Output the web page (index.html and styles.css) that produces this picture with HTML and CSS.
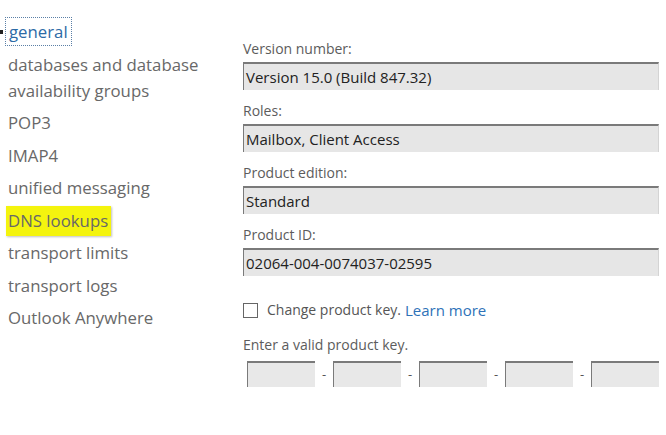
FILE: index.html
```html
<!DOCTYPE html>
<html lang="en">
<head>
  <meta charset="UTF-8">
  <title>Server properties</title>
  <link rel="stylesheet" href="styles.css">
</head>
<body>
<div class="page">
  <ul class="nav">
    <li class="active"><span class="focus">general</span></li>
    <li>databases and database availability groups</li>
    <li>POP3</li>
    <li>IMAP4</li>
    <li>unified messaging</li>
    <li><span class="mark">DNS lookups</span></li>
    <li>transport limits</li>
    <li>transport logs</li>
    <li>Outlook Anywhere</li>
  </ul>

  <div class="form">
    <div class="group">
      <label>Version number:</label>
      <div class="field">Version 15.0 (Build 847.32)</div>
    </div>
    <div class="group">
      <label>Roles:</label>
      <div class="field">Mailbox, Client Access</div>
    </div>
    <div class="group">
      <label>Product edition:</label>
      <div class="field">Standard</div>
    </div>
    <div class="group">
      <label>Product ID:</label>
      <div class="field">02064-004-0074037-02595</div>
    </div>

    <div class="check">
      <span class="box"></span>
      Change product key. <a href="#">Learn more</a>
    </div>

    <label class="hint">Enter a valid product key.</label>
    <div class="keys">
      <div class="key"></div><span class="dash">-</span>
      <div class="key"></div><span class="dash">-</span>
      <div class="key"></div><span class="dash">-</span>
      <div class="key"></div><span class="dash">-</span>
      <div class="key"></div>
    </div>
  </div>
</div>
</body>
</html>
```

FILE: styles.css
```css
body {
  margin: 0;
  padding: 0;
  background: #fff;
  font-family: "Open Sans", "Noto Sans", sans-serif;
}

.page {
  display: grid;
  grid-template-columns: 243px 416px;
}

.nav {
  list-style: none;
  margin: 0;
  padding: 19px 0 0 8px;
  font-size: 16.8px;
  line-height: 26px;
  color: #686868;
}

.nav li {
  margin-bottom: 6.5px;
  position: relative;
}

.nav li.active {
  color: #2c6aa6;
}

.nav li.active::before {
  content: "";
  position: absolute;
  left: -8px;
  top: 11px;
  width: 3px;
  height: 4px;
  background: #222;
}

.focus {
  outline: 1px dotted #5a7fa6;
  outline-offset: 2px;
  padding: 0 1px;
}

.mark {
  background: #f4f40e;
  margin-left: -2px;
  padding: 3px 3px 4px 2px;
  box-shadow: 1px 1px 2px rgba(0, 0, 0, 0.25);
}

.form {
  padding-top: 40px;
  color: #5c5c5c;
  font-size: 14px;
}

.group {
  margin-bottom: 12px;
}

label {
  display: block;
  line-height: 18px;
  margin-bottom: 4px;
}

.field {
  height: 26px;
  line-height: 26px;
  background: #e6e6e6;
  border-top: 2px solid #7a7a7a;
  border-left: 1px solid #7a7a7a;
  border-right: 1px solid #d4d4d4;
  padding-left: 2px;
  font-size: 15px;
  color: #222;
}

.check {
  display: flex;
  align-items: center;
  margin-top: 24px;
  font-size: 14px;
  color: #555;
  line-height: 20px;
}

.check a {
  color: #2e72b8;
  text-decoration: none;
  margin-left: 4px;
  font-size: 15px;
}

.box {
  width: 13px;
  height: 13px;
  border: 1px solid #666;
  margin-right: 9px;
}

.hint {
  margin-top: 16px;
  margin-bottom: 7px;
}

.keys {
  display: flex;
  align-items: center;
  padding-left: 4px;
}

.key {
  width: 67px;
  height: 24px;
  background: #e8e8e8;
  border-top: 2px solid #7a7a7a;
  border-left: 1px solid #7a7a7a;
}

.dash {
  width: 18px;
  text-align: center;
  font-size: 13px;
  color: #555;
}
```
